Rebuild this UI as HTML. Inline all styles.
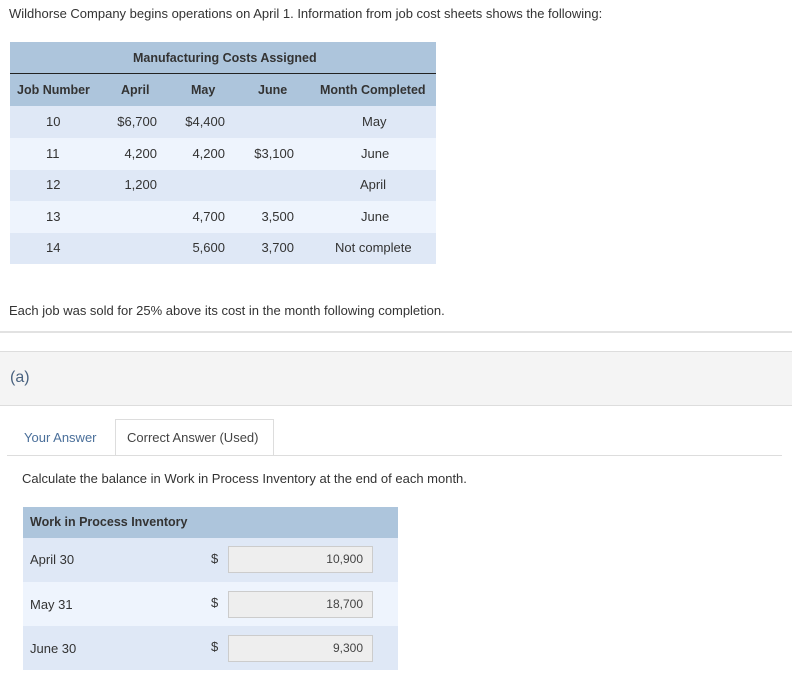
<!DOCTYPE html>
<html><head><style>
*{margin:0;padding:0;box-sizing:border-box}
body{width:792px;height:698px;background:#fff;font-family:"Liberation Sans",sans-serif;font-size:13px;color:#333;position:relative;overflow:hidden}
.a{position:absolute;white-space:nowrap}
.r{position:absolute;left:10px;width:426px}
.c{position:absolute;white-space:nowrap;line-height:32px;top:0}
.b{font-weight:bold;font-size:12.5px}
.inp{position:absolute;left:205px;width:145px;height:27px;background:#eee;border:1px solid #ccc;text-align:right;padding-right:9px;line-height:25px;font-size:12px;color:#444}
</style></head><body>
<div class="a" style="left:9px;top:6px">Wildhorse Company begins operations on April 1. Information from job cost sheets shows the following:</div>

<div class="r" style="top:42px;height:64px;background:#adc5dc"></div>
<div class="r" style="top:73px;height:1px;background:#222"></div>
<div class="a b" style="left:133px;top:51px;color:#333">Manufacturing Costs Assigned</div>
<div class="a b" style="left:17px;top:83px">Job Number</div>
<div class="a b" style="left:121px;top:83px">April</div>
<div class="a b" style="left:191px;top:83px">May</div>
<div class="a b" style="left:258px;top:83px">June</div>
<div class="a b" style="left:320px;top:83px">Month Completed</div>

<div class="r" style="top:106px;height:32px;background:#dfe8f6"></div>
<div class="r" style="top:138px;height:32px;background:#eef4fd"></div>
<div class="r" style="top:170px;height:31px;background:#dfe8f6"></div>
<div class="r" style="top:201px;height:32px;background:#eef4fd"></div>
<div class="r" style="top:233px;height:31px;background:#dfe8f6"></div>

<div style="position:absolute;left:0;top:106px;width:440px">
<div style="position:absolute;top:0;height:32px;width:100%">
<span class="c" style="left:46px">10</span><span class="c" style="right:283px">$6,700</span><span class="c" style="right:215px">$4,400</span><span class="c" style="left:362px">May</span></div>
<div style="position:absolute;top:32px;height:32px;width:100%">
<span class="c" style="left:46px">11</span><span class="c" style="right:283px">4,200</span><span class="c" style="right:215px">4,200</span><span class="c" style="right:146px">$3,100</span><span class="c" style="left:361px">June</span></div>
<div style="position:absolute;top:63px;height:32px;width:100%">
<span class="c" style="left:46px">12</span><span class="c" style="right:283px">1,200</span><span class="c" style="left:360px">April</span></div>
<div style="position:absolute;top:95px;height:32px;width:100%">
<span class="c" style="left:46px">13</span><span class="c" style="right:215px">4,700</span><span class="c" style="right:146px">3,500</span><span class="c" style="left:361px">June</span></div>
<div style="position:absolute;top:126px;height:32px;width:100%">
<span class="c" style="left:46px">14</span><span class="c" style="right:215px">5,600</span><span class="c" style="right:146px">3,700</span><span class="c" style="left:335px">Not complete</span></div>
</div>

<div class="a" style="left:9px;top:303px">Each job was sold for 25% above its cost in the month following completion.</div>
<div class="a" style="left:0;top:331px;width:792px;height:2px;background:#e2e2e2"></div>
<div class="a" style="left:0;top:351px;width:792px;height:55px;background:#f4f4f4;border-top:1px solid #ddd;border-bottom:1px solid #ddd"></div>
<div class="a" style="left:10px;top:369px;font-size:16px;color:#4a6380">(a)</div>

<div class="a" style="left:115px;top:419px;width:159px;height:37px;border:1px solid #ddd;border-bottom:none;background:#fff"></div>
<div class="a" style="left:7px;top:455px;width:775px;height:1px;background:#ddd"></div>
<div class="a" style="left:24px;top:430px;color:#4a6f9a">Your Answer</div>
<div class="a" style="left:127px;top:430px;color:#444">Correct Answer (Used)</div>
<div class="a" style="left:22px;top:471px">Calculate the balance in Work in Process Inventory at the end of each month.</div>

<div class="a" style="left:23px;top:507px;width:375px;height:31px;background:#adc5dc"></div>
<div class="a b" style="left:30px;top:515px">Work in Process Inventory</div>
<div class="a" style="left:23px;top:538px;width:375px;height:44px;background:#dfe8f6"><span class="a" style="left:7px;top:14px">April 30</span><span class="a" style="left:188px;top:13px">$</span><div class="inp" style="top:8px">10,900</div></div>
<div class="a" style="left:23px;top:582px;width:375px;height:44px;background:#eef4fd"><span class="a" style="left:7px;top:15px">May 31</span><span class="a" style="left:188px;top:13px">$</span><div class="inp" style="top:9px">18,700</div></div>
<div class="a" style="left:23px;top:626px;width:375px;height:44px;background:#dfe8f6"><span class="a" style="left:7px;top:15px">June 30</span><span class="a" style="left:188px;top:13px">$</span><div class="inp" style="top:9px">9,300</div></div>
</body></html>
